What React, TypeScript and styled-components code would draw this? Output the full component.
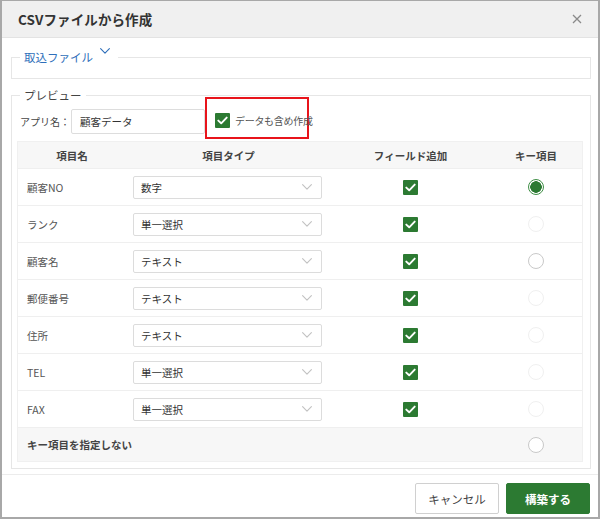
import React from "react";
import styled, { createGlobalStyle } from "styled-components";

const GlobalStyle = createGlobalStyle`
  html, body {
    margin: 0;
    padding: 0;
    background: #ffffff;
  }
  body {
    font-family: "Noto Sans CJK JP", "Noto Sans", "Liberation Sans", sans-serif;
    color: #333333;
  }
  * {
    box-sizing: border-box;
  }
`;

type Radio = "on" | "off" | "disabled";

interface FieldRow {
  name: string;
  type: string;
  radio: Radio;
}

const rows: FieldRow[] = [
  { name: "顧客NO", type: "数字", radio: "on" },
  { name: "ランク", type: "単一選択", radio: "disabled" },
  { name: "顧客名", type: "テキスト", radio: "off" },
  { name: "郵便番号", type: "テキスト", radio: "disabled" },
  { name: "住所", type: "テキスト", radio: "disabled" },
  { name: "TEL", type: "単一選択", radio: "disabled" },
  { name: "FAX", type: "単一選択", radio: "disabled" },
];

const CheckMark = () => (
  <svg width="11" height="9" viewBox="0 0 11 9" fill="none">
    <polyline
      points="1.3,4.6 4.2,7.3 9.7,1.6"
      stroke="#ffffff"
      strokeWidth="1.9"
      strokeLinecap="round"
      strokeLinejoin="round"
    />
  </svg>
);

const Chevron = ({ color, size }: { color: string; size: number }) => (
  <svg width={size} height={size * 0.6} viewBox="0 0 10 6" fill="none">
    <polyline
      points="0.6,0.6 5,5.2 9.4,0.6"
      stroke={color}
      strokeWidth="1.1"
      strokeLinecap="round"
      strokeLinejoin="round"
    />
  </svg>
);

const App = () => {
  return (
    <>
      <GlobalStyle />
      <Dialog>
        <Header>
          <Title>CSVファイルから作成</Title>
          <CloseButton aria-label="close">
            <svg width="10" height="10" viewBox="0 0 10 10">
              <path d="M1 1 L9 9 M9 1 L1 9" stroke="#8a8a8a" strokeWidth="1.3" />
            </svg>
          </CloseButton>
        </Header>

        <Body>
          <ImportSet>
            <Legend $link>
              取込ファイル
              <ChevronWrap>
                <Chevron color="#2f6fba" size={10} />
              </ChevronWrap>
            </Legend>
          </ImportSet>

          <PreviewSet>
            <Legend>プレビュー</Legend>
            <AppRow>
              <AppLabel>アプリ名：</AppLabel>
              <AppInput>顧客データ</AppInput>
              <Highlight>
                <CheckBox>
                  <CheckMark />
                </CheckBox>
                <HighlightText>データも含め作成</HighlightText>
              </Highlight>
            </AppRow>

            <Table>
              <HeadRow>
                <HeadCell>項目名</HeadCell>
                <HeadCell>項目タイプ</HeadCell>
                <HeadCell>フィールド追加</HeadCell>
                <HeadCell>キー項目</HeadCell>
              </HeadRow>
              {rows.map((row) => (
                <Row key={row.name}>
                  <NameCell>{row.name}</NameCell>
                  <TypeCell>
                    <Select>
                      <span>{row.type}</span>
                      <Chevron color="#c2c2c2" size={10} />
                    </Select>
                  </TypeCell>
                  <CenterCell>
                    <CheckBox>
                      <CheckMark />
                    </CheckBox>
                  </CenterCell>
                  <CenterCell>
                    <RadioDot $state={row.radio} />
                  </CenterCell>
                </Row>
              ))}
              <NoKeyRow>
                <NoKeyLabel>キー項目を指定しない</NoKeyLabel>
                <CenterCell>
                  <RadioDot $state="off" />
                </CenterCell>
              </NoKeyRow>
            </Table>
          </PreviewSet>
        </Body>

        <Footer>
          <CancelButton>キャンセル</CancelButton>
          <PrimaryButton>構築する</PrimaryButton>
        </Footer>
      </Dialog>
    </>
  );
};

export default App;

const Dialog = styled.div`
  width: 600px;
  height: 519px;
  border: 2px solid #a8a8a8;
  border-top-width: 1px;
  display: flex;
  flex-direction: column;
  background: #ffffff;
  overflow: hidden;
`;

const Header = styled.div`
  height: 37px;
  flex-shrink: 0;
  background: #f0f0f0;
  border-bottom: 1px solid #e3e3e3;
  display: flex;
  align-items: center;
  justify-content: space-between;
  padding: 0 12px 0 16px;
`;

const Title = styled.h1`
  margin: 0;
  font-size: 13.5px;
  font-weight: 700;
  color: #333333;
  letter-spacing: 0.1px;
`;

const CloseButton = styled.button`
  border: none;
  background: none;
  padding: 4px;
  display: flex;
  align-items: center;
  cursor: pointer;
`;

const Body = styled.div`
  flex: 1;
  min-height: 0;
  padding: 0 7px 0 9px;
  display: flex;
  flex-direction: column;
`;

const FieldSet = styled.fieldset`
  margin: 0;
  border: 1px solid #e6e6e6;
  min-width: 0;
`;

const ImportSet = styled(FieldSet)`
  margin-top: 11px;
  padding: 0 7px 13px 5px;
`;

const PreviewSet = styled(FieldSet)`
  margin-top: 8px;
  padding: 0 7px 6px 5px;
`;

const Legend = styled.legend<{ $link?: boolean }>`
  margin-left: 3px;
  padding: 0 4px;
  font-size: 11.5px;
  line-height: 16px;
  color: ${({ $link }) => ($link ? "#2f6fba" : "#444444")};
  display: flex;
  align-items: flex-start;
`;

const ChevronWrap = styled.span`
  display: inline-flex;
  margin-left: 7px;
  margin-top: -1px;
  margin-right: 4px;
`;

const AppRow = styled.div`
  display: flex;
  align-items: flex-start;
  padding: 6px 0 0 3px;
`;

const AppLabel = styled.span`
  width: 51px;
  flex-shrink: 0;
  white-space: nowrap;
  font-size: 10px;
  line-height: 25px;
  color: #444444;
`;

const AppInput = styled.div`
  width: 134px;
  height: 25px;
  flex-shrink: 0;
  border: 1px solid #dddddd;
  border-radius: 2px;
  padding-left: 8px;
  font-size: 10.5px;
  line-height: 23px;
  color: #333333;
`;

const Highlight = styled.div`
  width: 104px;
  height: 42px;
  flex-shrink: 0;
  margin: -12px 0 -5px 0;
  border: 2px solid #e8141b;
  display: flex;
  align-items: center;
  gap: 5px;
  padding: 4px 0 0 8px;
`;

const HighlightText = styled.span`
  font-size: 10px;
  letter-spacing: -0.3px;
  color: #555555;
  white-space: nowrap;
`;

const Table = styled.div`
  margin-top: 7px;
  border: 1px solid #f0f0f0;
  display: flex;
  flex-direction: column;
`;

const gridColumns = "108px 205px 159px 1fr";

const HeadRow = styled.div`
  display: grid;
  grid-template-columns: ${gridColumns};
  height: 27px;
  background: #f7f7f7;
  border-bottom: 1px solid #efefef;
`;

const HeadCell = styled.div`
  display: flex;
  align-items: center;
  justify-content: center;
  font-size: 10.5px;
  font-weight: 700;
  color: #444444;
`;

const Row = styled.div`
  display: grid;
  grid-template-columns: ${gridColumns};
  height: 37px;
  border-bottom: 1px solid #efefef;
`;

const NameCell = styled.div`
  display: flex;
  align-items: center;
  padding-left: 9px;
  font-size: 10.5px;
  color: #555555;
`;

const TypeCell = styled.div`
  display: flex;
  align-items: center;
  padding-left: 7px;
`;

const Select = styled.div`
  width: 189px;
  height: 23px;
  border: 1px solid #dcdcdc;
  border-radius: 2px;
  display: flex;
  align-items: center;
  justify-content: space-between;
  padding: 0 9px 0 7px;
  font-size: 10.5px;
  color: #333333;
`;

const CenterCell = styled.div`
  display: flex;
  align-items: center;
  justify-content: center;
`;

const CheckBox = styled.span`
  width: 15px;
  height: 15px;
  flex-shrink: 0;
  background: #2c7a32;
  border-radius: 1px;
  display: inline-flex;
  align-items: center;
  justify-content: center;
`;

const RadioDot = styled.span<{ $state: Radio }>`
  width: 16px;
  height: 16px;
  border-radius: 50%;
  border: 1px solid
    ${({ $state }) =>
      $state === "on" ? "#3f8f46" : $state === "off" ? "#c9c9c9" : "#f0f0f0"};
  background: ${({ $state }) =>
    $state === "on" ? "radial-gradient(circle, #2c7a32 0 5.5px, #ffffff 6px)" : "#ffffff"};
`;

const NoKeyRow = styled.div`
  display: grid;
  grid-template-columns: 472px 1fr;
  height: 33px;
  background: #f7f7f7;
`;

const NoKeyLabel = styled.div`
  display: flex;
  align-items: center;
  padding-left: 9px;
  font-size: 10.5px;
  font-weight: 700;
  color: #444444;
`;

const Footer = styled.div`
  flex-shrink: 0;
  border-top: 1px solid #ececec;
  padding: 8px 8px 0 0;
  height: 43px;
  display: flex;
  justify-content: flex-end;
  gap: 7px;
`;

const BaseButton = styled.button`
  width: 84px;
  height: 31px;
  border-radius: 2px;
  font-family: inherit;
  font-size: 11.5px;
  cursor: pointer;
`;

const CancelButton = styled(BaseButton)`
  background: #ffffff;
  border: 1px solid #d0d0d0;
  color: #444444;
`;

const PrimaryButton = styled(BaseButton)`
  background: #2c7a32;
  border: 1px solid #2c7a32;
  color: #ffffff;
  font-weight: 700;
`;
